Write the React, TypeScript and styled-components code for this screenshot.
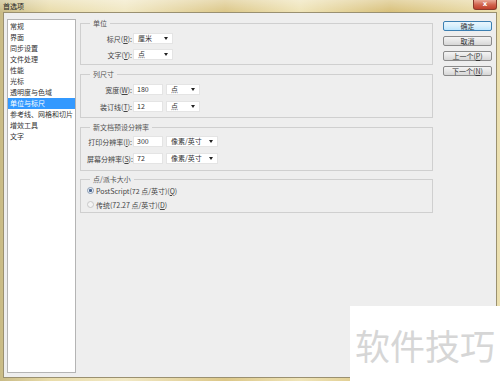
import { createGlobalStyle, styled } from 'styled-components'

const GlobalStyle = createGlobalStyle`
  html, body {
    margin: 0;
    padding: 0;
    background: #ffffff;
  }
  body {
    font-family: "Noto Sans CJK SC", "Noto Sans", sans-serif;
    font-size: 7px;
    color: #333;
  }
`

const categories = [
  '常规',
  '界面',
  '同步设置',
  '文件处理',
  '性能',
  '光标',
  '透明度与色域',
  '单位与标尺',
  '参考线、网格和切片',
  '增效工具',
  '文字',
]

const App = () => {
  return (
    <Window>
      <GlobalStyle />
      <TitleBar>
        <Title>首选项</Title>
        <CloseButton>x</CloseButton>
      </TitleBar>

      <Body>
        <CategoryList>
          {categories.map((c) => (
            <CategoryItem key={c} $active={c === '单位与标尺'}>
              {c}
            </CategoryItem>
          ))}
        </CategoryList>

        <Main>
          <Group $mt={0} $pt={5} $pb={4} $gap={5}>
            <Legend>单位</Legend>
            <Row>
              <Label>
                标尺(<u>R</u>):
              </Label>
              <Select $w={40}>厘米</Select>
            </Row>
            <Row>
              <Label>
                文字(<u>Y</u>):
              </Label>
              <Select $w={40}>点</Select>
            </Row>
          </Group>

          <Group $mt={4} $pt={5} $pb={5} $gap={6}>
            <Legend>列尺寸</Legend>
            <Row>
              <Label>
                宽度(<u>W</u>):
              </Label>
              <Input>180</Input>
              <Select $w={34}>点</Select>
            </Row>
            <Row>
              <Label>
                装订线(<u>T</u>):
              </Label>
              <Input>12</Input>
              <Select $w={34}>点</Select>
            </Row>
          </Group>

          <Group $mt={4} $pt={4} $pb={6} $gap={6}>
            <Legend>新文档预设分辨率</Legend>
            <Row>
              <Label>
                打印分辨率(<u>I</u>):
              </Label>
              <Input>300</Input>
              <Select $w={52}>像素/英寸</Select>
            </Row>
            <Row>
              <Label>
                屏幕分辨率(<u>S</u>):
              </Label>
              <Input>72</Input>
              <Select $w={52}>像素/英寸</Select>
            </Row>
          </Group>

          <Group $mt={3} $pt={1} $pb={2} $gap={3}>
            <Legend>点/派卡大小</Legend>
            <Row>
              <Radio $checked />
              <span>
                PostScript(72 点/英寸)(<u>Q</u>)
              </span>
            </Row>
            <Row>
              <Radio />
              <span>
                传统(72.27 点/英寸)(<u>D</u>)
              </span>
            </Row>
          </Group>
        </Main>

        <Buttons>
          <Button $primary>确定</Button>
          <Button>取消</Button>
          <Button>
            上一个(<u>P</u>)
          </Button>
          <Button>
            下一个(<u>N</u>)
          </Button>
        </Buttons>
      </Body>

      <Watermark>软件技巧</Watermark>
    </Window>
  )
}

const Window = styled.div`
  position: relative;
  width: 500px;
  height: 381px;
  box-sizing: border-box;
  padding: 0 3px 3px 3px;
  display: flex;
  flex-direction: column;
  overflow: hidden;
  background: linear-gradient(
    90deg,
    #c9bb86 0%,
    #e9dcaa 10%,
    #f1e8c4 25%,
    #dcc788 45%,
    #efe4b8 60%,
    #d8c07a 78%,
    #ece0b0 100%
  );
`
const TitleBar = styled.div`
  height: 12px;
  flex-shrink: 0;
  display: flex;
  align-items: flex-start;
  justify-content: space-between;
  background: linear-gradient(rgba(255, 255, 255, 0.35), rgba(255, 255, 255, 0));
  margin: 0 -3px;
  padding: 0 3px;
`
const Title = styled.div`
  font-size: 7px;
  line-height: 12px;
  color: #222;
`
const CloseButton = styled.div`
  width: 24px;
  height: 10px;
  box-sizing: border-box;
  border: 1px solid #8a3a2a;
  border-top: none;
  border-radius: 0 0 3px 3px;
  background: linear-gradient(#e9a996, #d0604a 55%, #c0412c);
  color: #fff;
  font-family: "DejaVu Sans", sans-serif;
  font-size: 7px;
  font-weight: bold;
  line-height: 8px;
  text-align: center;
`
const Body = styled.div`
  flex: 1;
  display: flex;
  align-items: flex-start;
  box-sizing: border-box;
  padding: 5px 4px 4px 3px;
  background: #eeeeee;
  border: 1px solid #9a9070;
`
const CategoryList = styled.div`
  width: 69px;
  height: 354px;
  margin-top: 1px;
  margin-right: 4px;
  box-sizing: border-box;
  padding: 1px 0 0 0;
  background: #fff;
  border: 1px solid #b4b4b4;
`
const CategoryItem = styled.div<{ $active?: boolean }>`
  height: 11px;
  line-height: 11px;
  padding-left: 2px;
  white-space: nowrap;
  background: ${(p) => (p.$active ? '#3399ff' : 'transparent')};
  color: ${(p) => (p.$active ? '#fff' : '#333')};
`
const Main = styled.div`
  width: 353px;
  display: flex;
  flex-direction: column;
`
const Group = styled.fieldset<{ $mt: number; $pt: number; $pb: number; $gap: number }>`
  margin: ${(p) => p.$mt}px 0 0 0;
  min-width: 0;
  padding: ${(p) => p.$pt}px 6px ${(p) => p.$pb}px 6px;
  border: 1px solid #cfcfcf;
  display: flex;
  flex-direction: column;
  gap: ${(p) => p.$gap}px;
`
const Legend = styled.legend`
  margin-left: 3px;
  padding: 0 3px;
  font-size: 7px;
  line-height: 10px;
  color: #555;
`
const Row = styled.div`
  height: 11px;
  display: flex;
  align-items: center;
  white-space: nowrap;
  color: #444;
`
const Label = styled.div`
  width: 45px;
  margin-right: 1px;
  text-align: right;
  white-space: nowrap;
`
const Field = styled.div`
  height: 11px;
  box-sizing: border-box;
  background: #fff;
  border: 1px solid #e4e4e4;
  line-height: 9px;
  font-size: 7px;
  color: #333;
`
const Input = styled(Field)`
  width: 30px;
  padding-left: 3px;
  margin-right: 3px;
`
const Select = styled(Field)<{ $w: number }>`
  position: relative;
  width: ${(p) => p.$w}px;
  padding-left: 4px;

  &::after {
    content: '';
    position: absolute;
    right: 4px;
    top: 3px;
    border-left: 2px solid transparent;
    border-right: 2px solid transparent;
    border-top: 3px solid #222;
  }
`
const Radio = styled.div<{ $checked?: boolean }>`
  width: 5px;
  height: 5px;
  margin-right: 2px;
  border-radius: 50%;
  border: 1px solid ${(p) => (p.$checked ? '#8a9cb3' : '#c8c8c8')};
  background: ${(p) =>
    p.$checked
      ? 'radial-gradient(circle, #4a6690 0 1.3px, #e8eef5 1.8px)'
      : '#f4f4f4'};
`
const Buttons = styled.div`
  width: 49px;
  margin-left: 10px;
  margin-top: 3px;
  display: flex;
  flex-direction: column;
  gap: 5px;
`
const Button = styled.div<{ $primary?: boolean }>`
  height: 10px;
  box-sizing: border-box;
  border: 1px solid ${(p) => (p.$primary ? '#3c7fb1' : '#8a8a8a')};
  border-radius: 2px;
  background: ${(p) =>
    p.$primary
      ? 'linear-gradient(#eaf6fd, #d9f0fc 50%, #bee6fd)'
      : 'linear-gradient(#f4f4f4, #e6e6e6 50%, #d6d6d6)'};
  font-size: 7px;
  line-height: 8px;
  text-align: center;
  color: #333;
  white-space: nowrap;
`
const Watermark = styled.div`
  position: absolute;
  left: 350px;
  top: 306px;
  width: 150px;
  height: 75px;
  box-sizing: border-box;
  padding: 19px 0 0 5px;
  background: #fff;
  color: #d6d6d6;
  font-family: "Noto Sans CJK SC", sans-serif;
  font-size: 35px;
  line-height: 40px;
  white-space: nowrap;
`

export default App
